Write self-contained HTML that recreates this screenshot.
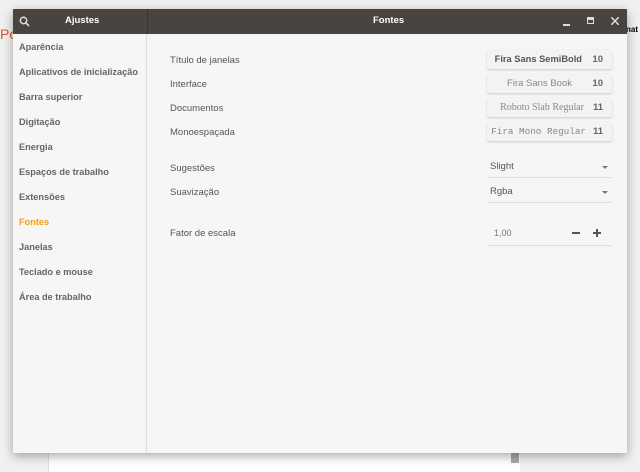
<!DOCTYPE html>
<html><head><meta charset="utf-8"><style>
*{margin:0;padding:0;box-sizing:border-box}
body{width:640px;height:472px;overflow:hidden;background:#f1f1f1;font-family:"Liberation Sans",sans-serif;position:relative}
.abs{position:absolute}
.win{left:13px;top:9px;width:614px;height:444px;background:#f6f6f6;box-shadow:0 3px 10px rgba(0,0,0,.35)}
.hdr{left:0;top:0;width:614px;height:25px;background:#4a4440}
.side{left:0;top:25px;width:134px;height:419px;border-right:1px solid #dcdcdc}
.si{position:absolute;left:6px;font-size:9.2px;font-weight:bold;color:#6a6462}
.lab{position:absolute;left:157px;font-size:9.5px;color:#5a5452}
.btn{position:absolute;left:474px;width:125px;height:19px;background:#f3f3f3;border-radius:2px;box-shadow:0 1px 2px rgba(0,0,0,.18);font-size:9.5px;color:#888;line-height:19px}
.btn .n{position:absolute;right:9px;font-weight:bold;color:#666}
.btn .t{position:absolute;right:40px}
.dd{position:absolute;left:474px;width:125px;border-bottom:1px solid #ddd;height:22px;font-size:9.5px;color:#5a5452;line-height:22px;padding-left:3px}
.dd:after{content:"";position:absolute;right:4px;top:10px;border:3px solid transparent;border-top:3px solid #777}
</style></head><body>
<div class="abs" style="left:0;top:26px;font-size:14px;color:#e2532a">Po</div>
<div class="abs" style="left:48px;top:453px;width:472px;height:19px;background:#fff;border-left:1px solid #ddd"></div>
<div class="abs" style="left:511px;top:453px;width:8px;height:10px;background:#aaa"></div>
<div class="abs" style="left:626px;top:25px;font-size:8px;font-weight:bold">nat</div>
<div class="abs win">
 <div class="abs hdr">
  <svg class="abs" style="left:6px;top:7px" width="11" height="11" viewBox="0 0 11 11"><circle cx="4.5" cy="4.5" r="3.2" fill="none" stroke="#ddd" stroke-width="1.5"/><path d="M7 7l3 3" stroke="#ddd" stroke-width="1.6"/></svg>
  <div class="abs" style="left:52px;top:6px;font-size:9.5px;font-weight:bold;color:#fff">Ajustes</div>
  <div class="abs" style="left:134px;top:0;width:1px;height:25px;background:#3a3532"></div>
  <div class="abs" style="left:360px;top:6px;font-size:9.5px;font-weight:bold;color:#fff">Fontes</div>
  <div class="abs" style="left:550px;top:15px;width:7px;height:2px;background:#ddd"></div>
  <div class="abs" style="left:574px;top:8px;width:7px;height:7px;border:1.5px solid #ddd;border-top-width:3px"></div>
  <svg class="abs" style="left:598px;top:8px" width="8" height="8"><path d="M0 0L8 8M8 0L0 8" stroke="#ddd" stroke-width="1.5"/></svg>
 </div>
 <div class="abs side">
  <div class="si" style="top:8px">Aparência</div>
  <div class="si" style="top:33px">Aplicativos de inicialização</div>
  <div class="si" style="top:58px">Barra superior</div>
  <div class="si" style="top:83px">Digitação</div>
  <div class="si" style="top:108px">Energia</div>
  <div class="si" style="top:133px">Espaços de trabalho</div>
  <div class="si" style="top:158px">Extensões</div>
  <div class="si" style="top:183px;color:#f39c1a">Fontes</div>
  <div class="si" style="top:208px">Janelas</div>
  <div class="si" style="top:233px">Teclado e mouse</div>
  <div class="si" style="top:258px">Área de trabalho</div>
 </div>
 <div class="lab" style="top:46px">Título de janelas</div>
 <div class="lab" style="top:70px">Interface</div>
 <div class="lab" style="top:94px">Documentos</div>
 <div class="lab" style="top:118px">Monoespaçada</div>
 <div class="btn" style="top:41px"><span class="t" style="font-weight:bold;color:#555;font-size:9.3px;right:30px">Fira Sans SemiBold</span><span class="n">10</span></div>
 <div class="btn" style="top:65px"><span class="t">Fira Sans Book</span><span class="n">10</span></div>
 <div class="btn" style="top:89px"><span class="t" style="font-family:'Liberation Serif',serif;font-size:10px;right:28px">Roboto Slab Regular</span><span class="n">11</span></div>
 <div class="btn" style="top:113px"><span class="t" style="font-family:'Liberation Mono',monospace;right:26px;font-size:9.3px">Fira Mono Regular</span><span class="n">11</span></div>
 <div class="lab" style="top:154px">Sugestões</div>
 <div class="lab" style="top:178px">Suavização</div>
 <div class="lab" style="top:219px">Fator de escala</div>
 <div class="dd" style="top:147px">Slight</div>
 <div class="dd" style="top:172px">Rgba</div>
 <div class="abs" style="left:474px;top:223px;width:125px;height:14px;border-bottom:1px solid #ddd"></div>
 <div class="abs" style="left:481px;top:219px;font-size:9px;color:#777">1,00</div>
 <div class="abs" style="left:559px;top:223px;width:8px;height:1.5px;background:#555"></div>
 <div class="abs" style="left:580px;top:223px;width:8px;height:1.5px;background:#555"></div>
 <div class="abs" style="left:583.3px;top:219.5px;width:1.5px;height:8px;background:#555"></div>
</div>
</body></html>
